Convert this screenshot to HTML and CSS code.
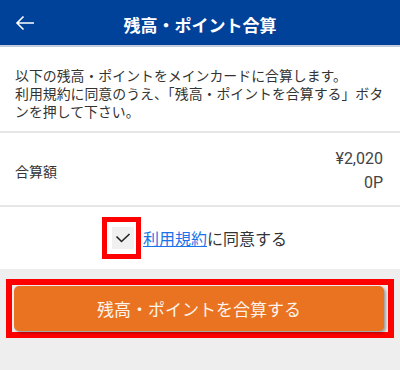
FILE: index.html
```html
<!DOCTYPE html>
<html lang="ja">
<head>
<meta charset="utf-8">
<link rel="stylesheet" href="styles.css">
</head>
<body>
<header class="appbar">
  <svg class="back" width="20" height="16" viewBox="0 0 20 16"><path d="M19 8H2M8.5 1.5L2 8l6.5 6.5" fill="none" stroke="#fff" stroke-width="1.6"/></svg>
  <h1 class="title">残高・ポイント合算</h1>
</header>
<section class="intro">
  <p>以下の残高・ポイントをメインカードに合算します。<br>利用規約に同意のうえ、「残高・ポイントを合算する」ボタンを押して下さい。</p>
</section>
<section class="amount">
  <div class="label">合算額</div>
  <div class="values">
    <div>¥2,020</div>
    <div>0P</div>
  </div>
</section>
<section class="agree">
  <span class="mark">
    <span class="checkbox">
      <svg width="16" height="10" viewBox="0 0 16 10"><path d="M1.5 3.5l5 5L14.5 1" fill="none" stroke="#222" stroke-width="1.6"/></svg>
    </span>
  </span>
  <span class="agree-text"><a class="terms" href="#">利用規約</a>に同意する</span>
</section>
<div class="action">
  <div class="mark-wide">
    <button class="submit">残高・ポイントを合算する</button>
  </div>
</div>
</body>
</html>
```
FILE: styles.css
```css
* { box-sizing: border-box; }
html, body { margin: 0; padding: 0; }
body {
  background: #eeeeee;
  font-family: "Noto Sans CJK JP", "Noto Sans", sans-serif;
  color: #333;
  width: 400px;
  height: 370px;
  overflow: hidden;
}
.appbar {
  height: 47px;
  background: #00419a;
  border-bottom: 2px solid #c3ccdc;
  display: flex;
  align-items: center;
  position: relative;
}
.back {
  margin-left: 15px;
}
.title {
  position: absolute;
  left: 0;
  right: 0;
  top: 2px;
  margin: 0;
  text-align: center;
  font-size: 17px;
  font-weight: bold;
  color: #fff;
  line-height: 45px;
}
.intro {
  background: #fff;
  padding: 19px 8px 11px 15px;
  border-bottom: 2px solid #e6e6e6;
}
.intro p {
  margin: 0;
  font-size: 13.9px;
  line-height: 18px;
  color: #333;
}
.amount {
  background: #fff;
  display: flex;
  justify-content: space-between;
  align-items: center;
  padding: 14px 17px 10px 15px;
  border-bottom: 2px solid #e6e6e6;
  font-size: 14px;
}
.values {
  text-align: right;
  font-family: Roboto, "Noto Sans", sans-serif;
  font-size: 16px;
  line-height: 24px;
  color: #444;
}
.agree {
  background: #fff;
  height: 62px;
  display: flex;
  align-items: center;
  justify-content: center;
  padding-right: 11px;
  font-size: 16px;
}
.mark {
  border: 5px solid #ff0000;
  padding: 5px 2px 5px 5px;
  margin-right: 2px;
  display: flex;
}
.checkbox {
  width: 22px;
  height: 22px;
  background: #f0f0f0;
  display: flex;
  align-items: center;
  justify-content: center;
}
.agree-text {
  color: #333;
}
.terms {
  color: #1a73e8;
  text-decoration: underline;
}
.action {
  padding: 10px 6px 0 6px;
}
.mark-wide {
  border: 6px solid #ff0000;
  padding: 1px 4px 1px 2px;
}
.submit {
  display: block;
  width: 100%;
  height: 45px;
  border: none;
  border-radius: 5px;
  background: #e97320;
  color: #fdf3ec;
  font-family: "Noto Sans CJK JP", sans-serif;
  font-size: 17px;
  box-shadow: 2px 2px 3px rgba(0,0,0,0.35);
  padding: 0;
}
```
